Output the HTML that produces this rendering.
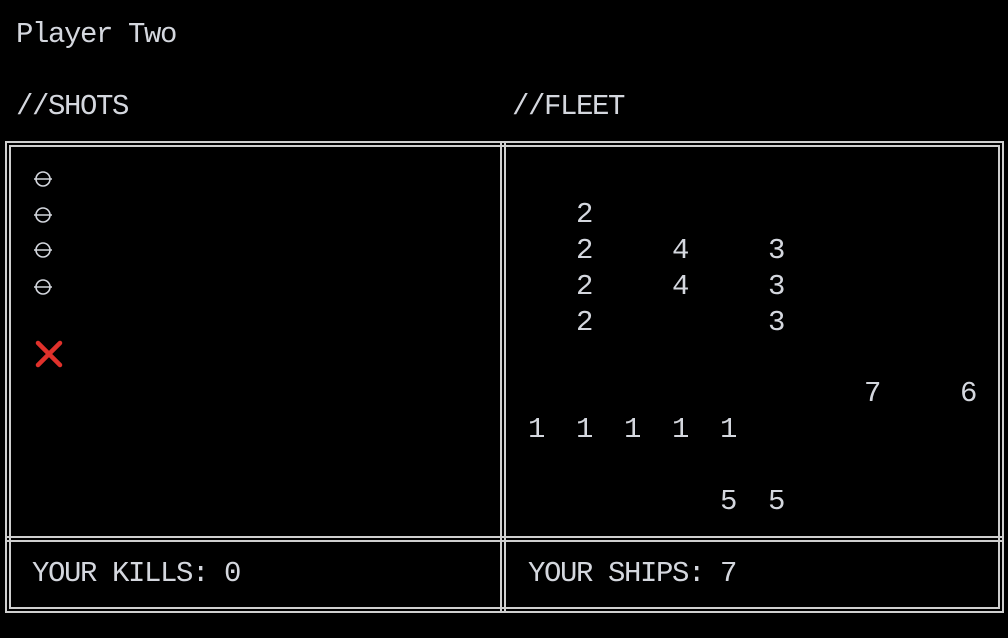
<!DOCTYPE html>
<html><head><meta charset="utf-8"><style>
html,body{margin:0;padding:0;background:#000;width:1008px;height:638px;overflow:hidden;position:relative}
.t{position:absolute;font-family:"Liberation Mono",monospace;font-size:29px;letter-spacing:-1.4px;color:#d4d7de;line-height:36px;height:36px;white-space:pre;transform:translate(2px,2px)}
.b{position:absolute;box-sizing:border-box;border-color:#cfcfcf}
</style></head><body>
<div class="t" style="left:14px;top:15px">Player Two</div>
<div class="t" style="left:14px;top:87px">//SHOTS</div>
<div class="t" style="left:510px;top:87px">//FLEET</div>

<div class="b" style="left:5px;top:141px;width:999px;height:472px;border:6px double #cfcfcf"></div>
<div class="b" style="left:500px;top:141px;width:7px;height:472px;border-left:6px double #cfcfcf"></div>
<div class="b" style="left:5px;top:536px;width:999px;height:7px;border-top:6px double #cfcfcf"></div>

<div class="t" style="left:574px;top:195px">2</div>
<div class="t" style="left:574px;top:231px">2</div>
<div class="t" style="left:670px;top:231px">4</div>
<div class="t" style="left:766px;top:231px">3</div>
<div class="t" style="left:574px;top:267px">2</div>
<div class="t" style="left:670px;top:267px">4</div>
<div class="t" style="left:766px;top:267px">3</div>
<div class="t" style="left:574px;top:303px">2</div>
<div class="t" style="left:766px;top:303px">3</div>
<div class="t" style="left:862px;top:374px">7</div>
<div class="t" style="left:958px;top:374px">6</div>
<div class="t" style="left:526px;top:410px">1</div>
<div class="t" style="left:574px;top:410px">1</div>
<div class="t" style="left:622px;top:410px">1</div>
<div class="t" style="left:670px;top:410px">1</div>
<div class="t" style="left:718px;top:410px">1</div>
<div class="t" style="left:718px;top:482px">5</div>
<div class="t" style="left:766px;top:482px">5</div>

<div class="t" style="left:30px;top:554px">YOUR KILLS: 0</div>
<div class="t" style="left:526px;top:554px">YOUR SHIPS: 7</div>

<svg width="1008" height="638" style="position:absolute;left:0;top:0" fill="none">
<g stroke="#d4d7de" stroke-width="1.6">
<circle cx="43" cy="179" r="7"/><line x1="34" y1="179" x2="52" y2="179"/>
<circle cx="43" cy="215" r="7"/><line x1="34" y1="215" x2="52" y2="215"/>
<circle cx="43" cy="250" r="7"/><line x1="34" y1="250" x2="52" y2="250"/>
<circle cx="43" cy="287" r="7"/><line x1="34" y1="287" x2="52" y2="287"/>
</g>
<g stroke="#e0312b" stroke-width="4.5" stroke-linecap="round">
<line x1="38" y1="343" x2="60" y2="365"/><line x1="60" y1="343" x2="38" y2="365"/>
</g>
</svg>
</body></html>
